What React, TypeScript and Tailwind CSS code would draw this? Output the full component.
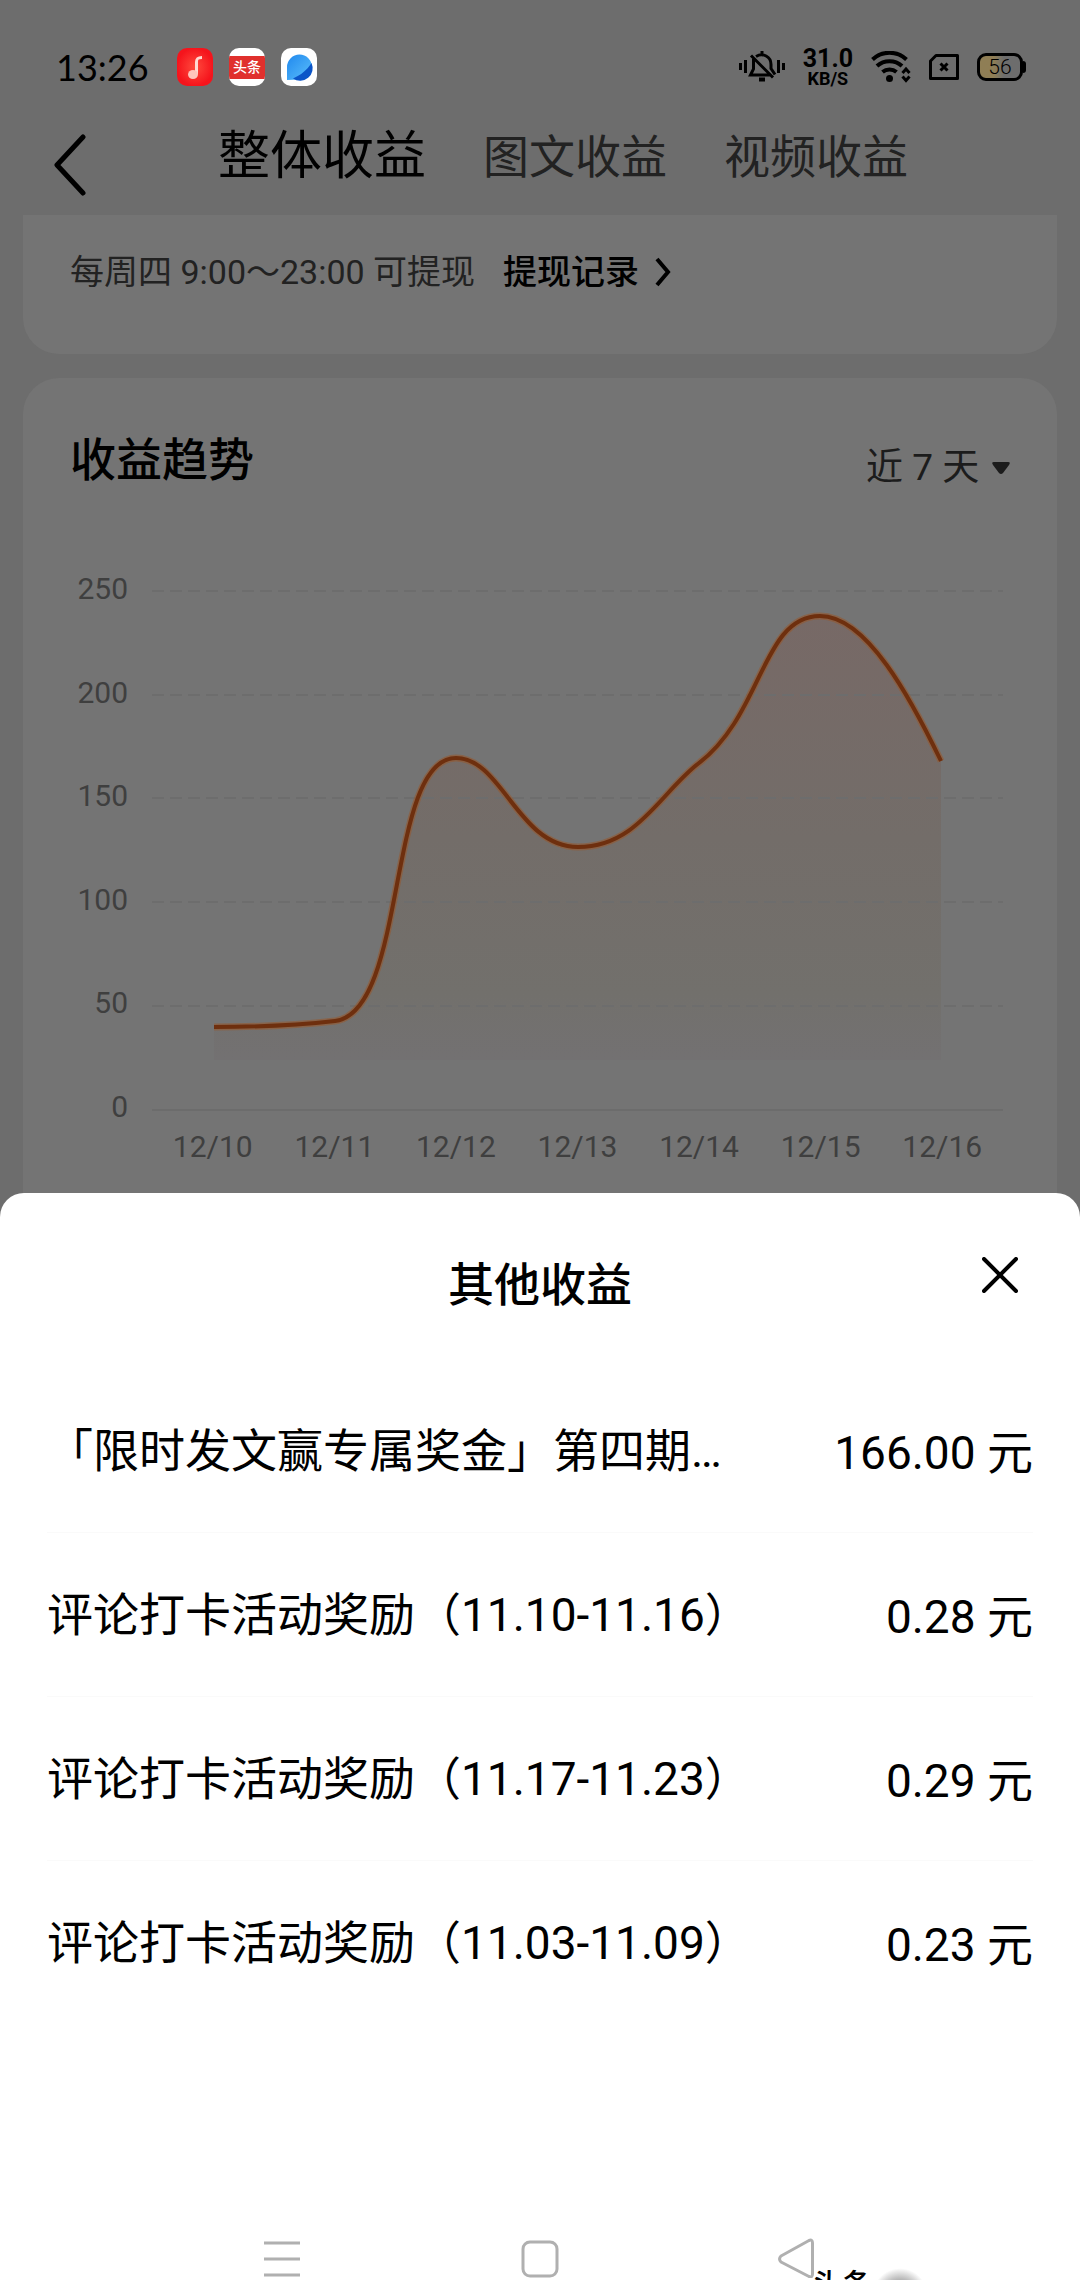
import { useState } from "react";
import clsx from "clsx";

interface Reward {
  title: string;
  amount: string;
}

const TABS = ["整体收益", "图文收益", "视频收益"];

const REWARDS: Reward[] = [
  { title: "「限时发文赢专属奖金」第四期…", amount: "166.00" },
  { title: "评论打卡活动奖励（11.10-11.16）", amount: "0.28" },
  { title: "评论打卡活动奖励（11.17-11.23）", amount: "0.29" },
  { title: "评论打卡活动奖励（11.03-11.09）", amount: "0.23" },
];

const Y_TICKS = [250, 200, 150, 100, 50, 0];
const DATES = ["12/10", "12/11", "12/12", "12/13", "12/14", "12/15", "12/16"];

const CURVE =
  "M62 436 C104 436 138 435 183 430 C256 421 234 167 304 167 C350 167 366 256 426 256 C485 256 508 202 547 172 C611 123 610 25 668 25 C715 25 759 108 789 170";

function MusicIcon() {
  return (
    <svg viewBox="0 0 36 38" className="h-[38px] w-9" aria-hidden="true">
      <defs>
        <radialGradient id="music">
          <stop offset="0" stopColor="#ff4a3d" />
          <stop offset="1" stopColor="#f5141c" />
        </radialGradient>
      </defs>
      <rect width="36" height="38" rx="10" fill="url(#music)" />
      <path d="M25 9.5c-4 0-5.500 1-5.500 4.500v12" fill="none" stroke="#ffd9d2" strokeWidth="3" />
      <ellipse cx="16" cy="26.500" rx="5" ry="4.500" fill="#ffc4bc" />
    </svg>
  );
}

function NewsIcon() {
  return (
    <span className="flex h-[38px] w-9 items-center overflow-hidden rounded-[10px] bg-white">
      <span className="w-full bg-[#e0302d] text-center text-[14px] leading-[23px] font-medium text-white">头条</span>
    </span>
  );
}

function BrowserIcon() {
  return (
    <svg viewBox="0 0 36 38" className="h-[38px] w-9" aria-hidden="true">
      <defs>
        <linearGradient id="drop" x1="0" y1="0" x2="1" y2="1">
          <stop offset="0" stopColor="#2088ee" />
          <stop offset="1" stopColor="#5cc0fb" />
        </linearGradient>
      </defs>
      <rect width="36" height="38" rx="10" fill="#fff" />
      <path d="M6 32V19A12.500 12.500 0 1 1 18.500 31.500Z" fill="url(#drop)" />
      <path d="M30.500 15A12.500 12.500 0 0 1 12 30.500C20 27 26 22 30.500 15Z" fill="#0b55c8" />
    </svg>
  );
}

function MutedBellIcon() {
  return (
    <svg viewBox="0 0 46 32" className="h-8 w-[46px]" fill="none" stroke="#000" strokeWidth="3" aria-hidden="true">
      <path d="M1.500 12v7M6.500 9v13M39.500 9v13M44.500 12v7" />
      <path d="M23 0v4M17 5.500c7-4 15 0 15 8v4l4 6" />
      <path d="M14.500 8v10l-3 6H31M12 4.500l22 22" />
      <path d="M20 28.500h6" strokeWidth="4" />
    </svg>
  );
}

function WifiIcon() {
  return (
    <svg viewBox="0 0 40 32" className="h-8 w-10" fill="none" stroke="#000" strokeWidth="4" aria-hidden="true">
      <path d="M1.500 8.500C11-.500 26-.500 35.500 8.500M6 15c7-6.500 18-6.500 25 0M11.500 21c4-3.500 10-3.500 14 0" />
      <circle cx="18.500" cy="27.500" r="3.500" fill="#000" stroke="none" />
      <path d="M31.500 22l3.500-4 3.500 4M31.500 25.500l3.500 4 3.500-4" strokeWidth="3" />
    </svg>
  );
}

function SimIcon() {
  return (
    <svg viewBox="0 0 30 26" className="h-[26px] w-[30px]" fill="none" stroke="#000" strokeWidth="3" aria-hidden="true">
      <path d="M7 1.500h21.500v23h-27V7z" strokeLinejoin="round" />
      <path d="M11.500 9.500l7 7M18.500 9.500l-7 7" strokeWidth="3" />
    </svg>
  );
}

function Battery() {
  return (
    <span className="flex items-center">
      <span className="flex h-7 w-[46px] items-center justify-center rounded-[9px] border-3 border-black bg-linear-to-r from-[#8f7e55] from-35% to-[#6d6d6d] to-60% text-[21px] leading-none font-light text-black">
        56
      </span>
      <span className="h-3 w-[3px] rounded-r bg-black" />
    </span>
  );
}

function StatusBar() {
  return (
    <div className="flex h-[134px] items-center justify-between pr-[54px] pl-14">
      <div className="flex items-center gap-4">
        <span className="w-[105px] font-['Lato'] text-[36px] leading-10 text-black">13:26</span>
        <MusicIcon />
        <NewsIcon />
        <BrowserIcon />
      </div>
      <div className="flex items-center gap-[18px]">
        <MutedBellIcon />
        <span className="flex flex-col text-center font-bold text-black">
          <span className="text-[25px] leading-6">31.0</span>
          <span className="text-[18px] leading-4">KB/S</span>
        </span>
        <WifiIcon />
        <SimIcon />
        <Battery />
      </div>
    </div>
  );
}

function TrendChart() {
  return (
    <div className="mt-[83px]">
      <div className="flex">
        <ul className="flex h-[548px] w-[58px] flex-col justify-between text-right text-[30px] leading-[30px] text-[#3f3f3f]">
          {Y_TICKS.map((tick) => (
            <li key={tick}>{tick}</li>
          ))}
        </ul>
        <svg
          viewBox="0 0 851 519"
          preserveAspectRatio="none"
          className="mt-[17px] mr-[7px] ml-6 h-[519px] min-w-0 flex-1 overflow-visible"
          role="img"
          aria-label="收益趋势"
        >
          <defs>
            <linearGradient id="area" x1="0" y1="0" x2="0" y2="1">
              <stop offset="0" stopColor="#776966" />
              <stop offset="0.500" stopColor="#736d69" />
              <stop offset="0.850" stopColor="#72706c" />
              <stop offset="1" stopColor="#737172" />
            </linearGradient>
          </defs>
          <path d={`${CURVE} V469 H62 Z`} fill="url(#area)" />
          {[0, 104, 207, 311, 415].map((y) => (
            <path key={y} d={`M0 ${y}H851`} stroke="#6d6d6d" strokeWidth="2" strokeDasharray="12 6" />
          ))}
          <path d="M0 519H851" stroke="#6c6c6c" strokeWidth="2" />
          <path d={CURVE} fill="none" stroke="#96592f" strokeOpacity="0.600" strokeWidth="7" />
          <path d={CURVE} fill="none" stroke="#6e2f0e" strokeWidth="4" />
        </svg>
      </div>
      <ul className="mt-[10px] mr-[7px] ml-[82px] grid grid-cols-7 text-center text-[30px] leading-[30px] text-[#3f3f3f]">
        {DATES.map((date) => (
          <li key={date}>{date}</li>
        ))}
      </ul>
    </div>
  );
}

function RewardSheet() {
  return (
    <section
      role="dialog"
      aria-labelledby="sheet-title"
      className="relative -mt-6 flex flex-1 flex-col rounded-t-3xl bg-white text-black"
    >
      <header className="relative flex h-[176px] items-center justify-center pt-2">
        <h2 id="sheet-title" className="text-[46px] leading-[60px] font-medium">
          其他收益
        </h2>
        <button type="button" aria-label="关闭" className="absolute top-16 right-[62px]">
          <svg viewBox="0 0 36 36" className="size-9" fill="none" stroke="#000" strokeWidth="4" strokeLinecap="round">
            <path d="M2 2l32 32M34 2L2 34" />
          </svg>
        </button>
      </header>
      <ul className="px-[47px]">
        {REWARDS.map((reward) => (
          <li
            key={reward.title}
            className="flex h-[164px] items-center justify-between border-b border-[#fafafa] text-[46px] leading-[60px] last:border-transparent"
          >
            <span>{reward.title}</span>
            <span className="pt-1">{reward.amount} 元</span>
          </li>
        ))}
      </ul>
      <nav className="mt-auto grid h-11 grid-cols-3 items-center justify-items-center px-[154px]">
        <button type="button" aria-label="最近任务">
          <svg viewBox="0 0 40 40" className="size-10" fill="none" stroke="#b0b0b0" strokeWidth="3">
            <path d="M1 5h36M1 21h36M1 37h36" />
          </svg>
        </button>
        <button type="button" aria-label="主屏幕">
          <svg viewBox="0 0 40 40" className="size-10" fill="none" stroke="#b0b0b0" strokeWidth="3">
            <rect x="3" y="4" width="34" height="34" rx="7" />
          </svg>
        </button>
        <button type="button" aria-label="返回">
          <svg viewBox="0 0 40 40" className="size-10" fill="none" stroke="#b0b0b0" strokeWidth="3" strokeLinejoin="round">
            <path d="M4 18L32 2.500Q35.500 1 35.500 5V36Q35.500 40 32 38.500L4 24Q1 21 4 18Z" />
          </svg>
        </button>
      </nav>
      {/* watermark peeking in from the bottom edge */}
      <div className="absolute right-[152px] bottom-0 flex h-3 w-[116px] overflow-hidden" aria-hidden="true">
        <span className="text-[30px] leading-[34px] font-medium">头条</span>
        <span className="h-14 w-14 shrink-0 rounded-full bg-radial from-[#555] to-white to-70%" />
      </div>
    </section>
  );
}

export default function App() {
  const [tab, setTab] = useState(TABS[0]);

  return (
    <div className="flex min-h-screen flex-col bg-[#6d6d6d] font-['Roboto','Noto_Sans_CJK_SC',sans-serif]" lang="zh-CN">
      <StatusBar />
      <header className="flex h-[81px] items-start pl-[54px]">
        <button type="button" aria-label="返回">
          <svg viewBox="0 0 32 62" className="h-[62px] w-8" fill="none" stroke="#000" strokeWidth="5" strokeLinecap="round" strokeLinejoin="round">
            <path d="M29 3L3 31l26 28" />
          </svg>
        </button>
        <div role="tablist" className="ml-[132px] flex h-[46px] items-center gap-[57px]">
          {TABS.map((name) => (
            <button
              key={name}
              type="button"
              role="tab"
              aria-selected={name === tab}
              onClick={() => setTab(name)}
              className={clsx(
                "leading-[60px]",
                name === tab ? "text-[52px] text-black" : "text-[46px] text-[#222]",
              )}
            >
              {name}
            </button>
          ))}
        </div>
      </header>

      <main className="flex flex-col gap-6 px-[23px]">
        <section className="flex h-[139px] items-start rounded-b-[36px] bg-[#747474] px-[47px] pt-8 text-[34px] leading-[50px]">
          <span className="text-[#222]">每周四 9:00～23:00 可提现</span>
          <a href="#records" className="ml-7 flex items-center font-medium text-black">
            提现记录
            <svg viewBox="0 0 16 30" className="ml-4 h-[30px] w-4" fill="none" stroke="#000" strokeWidth="4">
              <path d="M2 2l11 13L2 28" />
            </svg>
          </a>
        </section>

        <section className="rounded-t-[36px] bg-[#747474] px-[47px] pt-[51px] pb-[55px]">
          <div className="flex items-end justify-between">
            <h1 className="text-[46px] leading-[62px] font-medium text-black">收益趋势</h1>
            <label className="flex items-center text-[#1c1c1c]">
              <select aria-label="时间范围" className="appearance-none text-[37px] leading-[46px]">
                <option>近 7 天</option>
              </select>
              <svg viewBox="0 0 18 12" className="ml-3 h-3 w-[18px]" fill="currentColor">
                <path d="M2 0h14q3 0 1 3l-6 8q-2 2-4 0L1 3q-2-3 1-3z" />
              </svg>
            </label>
          </div>
          <TrendChart />
        </section>
      </main>

      <RewardSheet />
    </div>
  );
}
